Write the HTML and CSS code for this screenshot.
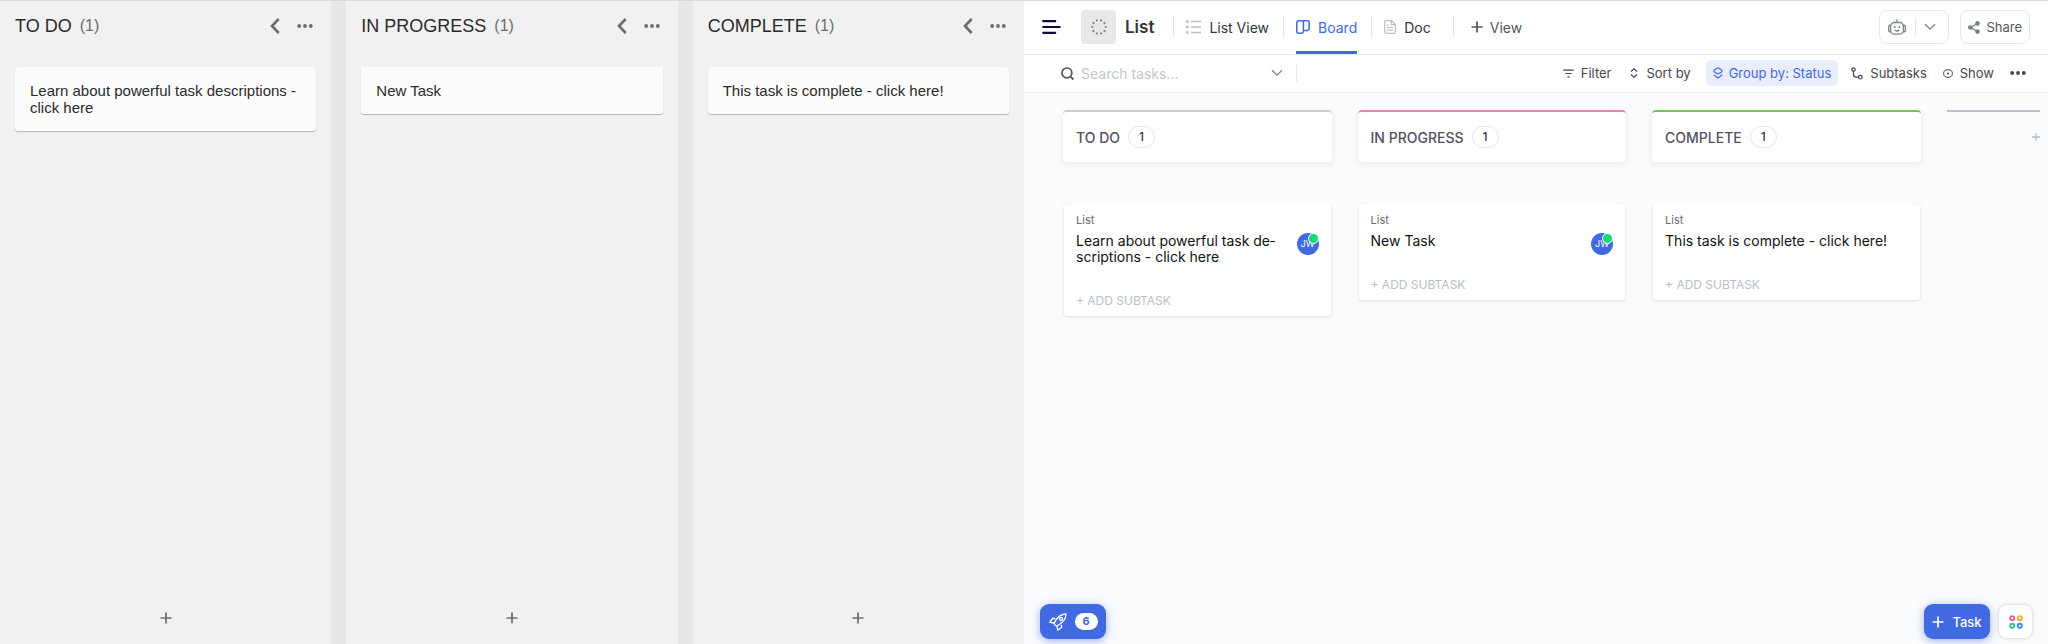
FILE: index.html
```html
<!DOCTYPE html>
<html lang="en">
<head>
    <meta charset="UTF-8">
    <meta name="viewport" content="width=device-width, initial-scale=1.0">
    <title>Boards</title>
    <link rel="stylesheet" href="styles.css">
</head>
<body>
    <!-- shared icons -->
    <svg class="sprite" aria-hidden="true">
        <symbol id="back" viewBox="0 0 10 16"><path d="M8.700 1 2 8l6.700 7" fill="none" stroke="currentColor" stroke-width="2.600"/></symbol>
        <symbol id="dots" viewBox="0 0 16 4"><g fill="currentColor"><circle cx="2.200" cy="2" r="1.900"/><circle cx="8" cy="2" r="1.900"/><circle cx="13.800" cy="2" r="1.900"/></g></symbol>
        <symbol id="plus" viewBox="0 0 12 12"><path d="M6 .5v11M.5 6h11" fill="none" stroke="currentColor" stroke-width="1.700"/></symbol>
        <symbol id="down" viewBox="0 0 12 8"><path d="M1 1.200l5 5 5-5" fill="none" stroke="currentColor" stroke-width="1.300"/></symbol>
    </svg>

    <div class="page">
        <section class="lanes">
            <div class="lane">
                <div class="lane-head">
                    <h2>TO DO</h2><span class="lane-count">(1)</span>
                    <button class="lane-back" aria-label="Collapse"><svg width="10" height="16"><use href="#back"/></svg></button>
                    <button class="lane-menu" aria-label="Menu"><svg width="16" height="4"><use href="#dots"/></svg></button>
                </div>
                <div class="note">Learn about powerful task descriptions - click here</div>
                <button class="lane-add" aria-label="Add task"><svg width="12" height="12"><use href="#plus"/></svg></button>
            </div>
            <div class="lane">
                <div class="lane-head">
                    <h2>IN PROGRESS</h2><span class="lane-count">(1)</span>
                    <button class="lane-back" aria-label="Collapse"><svg width="10" height="16"><use href="#back"/></svg></button>
                    <button class="lane-menu" aria-label="Menu"><svg width="16" height="4"><use href="#dots"/></svg></button>
                </div>
                <div class="note">New Task</div>
                <button class="lane-add" aria-label="Add task"><svg width="12" height="12"><use href="#plus"/></svg></button>
            </div>
            <div class="lane">
                <div class="lane-head">
                    <h2>COMPLETE</h2><span class="lane-count">(1)</span>
                    <button class="lane-back" aria-label="Collapse"><svg width="10" height="16"><use href="#back"/></svg></button>
                    <button class="lane-menu" aria-label="Menu"><svg width="16" height="4"><use href="#dots"/></svg></button>
                </div>
                <div class="note">This task is complete - click here!</div>
                <button class="lane-add" aria-label="Add task"><svg width="12" height="12"><use href="#plus"/></svg></button>
            </div>
        </section>

        <main class="app">
            <header class="topbar">
                <button class="burger" aria-label="Menu">
                    <svg width="19" height="14" viewBox="0 0 19 14"><path d="M1.200 1.200h12M1.200 7h16.500M1.200 12.800h12" fill="none" stroke="currentColor" stroke-width="2.200" stroke-linecap="round"/></svg>
                </button>
                <span class="list-icon">
                    <svg width="18" height="18" viewBox="0 0 18 18"><circle cx="9" cy="9" r="6.800" fill="none" stroke="currentColor" stroke-width="2.200" stroke-linecap="round" stroke-dasharray="0.010 3.990" pathLength="40"/></svg>
                </span>
                <h1>List</h1>
                <nav class="tabs">
                    <a class="tab" href="#">
                        <svg width="15" height="14" viewBox="0 0 15 14" class="pale"><path d="M5 1.500h10M5 7h10M5 12.500h10" fill="none" stroke="currentColor" stroke-width="1.500"/><path d="M0 1.500h2.600M0 7h2.600M0 12.500h2.600" stroke="currentColor" stroke-width="2.400"/></svg>
                        List View
                    </a>
                    <a class="tab active" href="#">
                        <svg width="14" height="14" viewBox="0 0 14 14"><path d="M2.500.8h9q1.700 0 1.700 1.700v6.300q0 1.700-1.700 1.700H7.400v1q0 1.700-1.700 1.700H2.500Q.8 13.200.8 11.500v-9Q.8.8 2.500.8zM7.400.8v9.700" fill="none" stroke="currentColor" stroke-width="1.500"/></svg>
                        Board
                    </a>
                    <a class="tab" href="#">
                        <svg width="12" height="14" viewBox="0 0 12 14" class="pale"><path d="M2.300.7h5.200l3.800 3.800v7.200q0 1.600-1.600 1.600H2.300Q.7 13.300.7 11.700V2.300Q.7.7 2.300.7zM7.300.9v3.800h3.800M3 5h2M3 7.500h6M3 10.200h6" fill="none" stroke="currentColor" stroke-width="1.200"/></svg>
                        Doc
                    </a>
                    <a class="tab add-view" href="#">
                        <svg width="12" height="12"><use href="#plus"/></svg>
                        View
                    </a>
                </nav>
                <button class="box-btn automate" aria-label="Automate">
                    <svg width="18" height="16" viewBox="0 0 18 16"><g fill="none" stroke="currentColor" stroke-width="1.300"><rect x="2.600" y="3.500" width="12.800" height="11.700" rx="4"/><path d="M9 .3v3M2.600 6Q.7 6 .7 8v3q0 2 1.900 2M15.400 6q1.900 0 1.900 2v3q0 2-1.900 2M6.700 11q2.300 2 4.600 0"/></g><circle cx="6.700" cy="8" r="1" fill="currentColor"/><circle cx="11.300" cy="8" r="1" fill="currentColor"/></svg>
                    <i class="split"></i>
                    <svg width="12" height="8"><use href="#down"/></svg>
                </button>
                <button class="box-btn share">
                    <svg width="12" height="13" viewBox="0 0 12 13"><path d="M9.500 2.500 2.500 6.500l7 4" fill="none" stroke="currentColor" stroke-width="1.200"/><g fill="currentColor"><circle cx="9.500" cy="2.400" r="2.300"/><circle cx="2.300" cy="6.500" r="2.300"/><circle cx="9.500" cy="10.600" r="2.300"/></g></svg>
                    <span>Share</span>
                </button>
            </header>

            <div class="toolbar">
                <label class="search">
                    <svg width="13" height="13" viewBox="0 0 13 13"><circle cx="5.900" cy="5.900" r="4.900" fill="none" stroke="currentColor" stroke-width="1.700"/><path d="M9.300 9.300l3.200 3.200" stroke="currentColor" stroke-width="1.900"/></svg>
                    <input type="text" placeholder="Search tasks..." aria-label="Search tasks">
                </label>
                <button class="search-more" aria-label="Search options"><svg width="12" height="8"><use href="#down"/></svg></button>
                <div class="tools">
                    <button class="tool">
                        <svg width="11" height="9" viewBox="0 0 11 9"><path d="M.3 1.200h10.400M2.300 4.500h6.400M4.400 7.800h2.200" stroke="currentColor" stroke-width="1.200"/></svg>
                        Filter
                    </button>
                    <button class="tool">
                        <svg width="12" height="10" viewBox="-3 0 12 10"><path d="M1 3.500 4 .9l3 2.600M1 6.500l3 2.600 3-2.600" fill="none" stroke="currentColor" stroke-width="1.200"/></svg>
                        Sort by
                    </button>
                    <button class="tool group">
                        <svg width="10" height="12" viewBox="0 0 10 12"><path d="M5 .8l4 2.400v1.500L5 7.100 1 4.700V3.200zM.8 7.800 5 10.900l4.200-3.100" fill="none" stroke="currentColor" stroke-width="1.200" stroke-linejoin="round"/></svg>
                        Group by: Status
                    </button>
                    <button class="tool">
                        <svg width="12" height="13" viewBox="0 0 12 13"><g fill="none" stroke="currentColor" stroke-width="1.200"><circle cx="2.500" cy="2.500" r="1.700"/><circle cx="9.300" cy="10.200" r="1.800"/><path d="M2.500 4.200v3.300q0 2.700 2.700 2.700h2.300"/></g></svg>
                        Subtasks
                    </button>
                    <button class="tool">
                        <svg width="10" height="9" viewBox="0 0 10 9"><ellipse cx="5" cy="4.500" rx="4.400" ry="3.800" fill="none" stroke="currentColor"/><circle cx="5" cy="4.500" r="1" fill="currentColor"/></svg>
                        Show
                    </button>
                    <button class="tool more" aria-label="More"><svg width="16" height="4"><use href="#dots"/></svg></button>
                </div>
            </div>

            <div class="board">
                <section class="column todo">
                    <div class="column-head"><h2>TO DO</h2><span class="count">1</span></div>
                    <article class="card">
                        <p class="card-list">List</p>
                        <div class="card-main">
                            <h3>Learn about powerful task de&shy;scriptions - click here</h3>
                            <span class="avatar">JW</span>
                        </div>
                        <button class="subtask">+ ADD SUBTASK</button>
                    </article>
                </section>
                <section class="column progress">
                    <div class="column-head"><h2>IN PROGRESS</h2><span class="count">1</span></div>
                    <article class="card">
                        <p class="card-list">List</p>
                        <div class="card-main">
                            <h3>New Task</h3>
                            <span class="avatar">JW</span>
                        </div>
                        <button class="subtask">+ ADD SUBTASK</button>
                    </article>
                </section>
                <section class="column complete">
                    <div class="column-head"><h2>COMPLETE</h2><span class="count">1</span></div>
                    <article class="card">
                        <p class="card-list">List</p>
                        <div class="card-main">
                            <h3>This task is complete - click here!</h3>
                        </div>
                        <button class="subtask">+ ADD SUBTASK</button>
                    </article>
                </section>
                <section class="new-column">
                    <button aria-label="Add status"><svg width="8" height="8" viewBox="0 0 8 8"><path d="M4 0v8M0 4h8" stroke="currentColor" stroke-width="1.400"/></svg></button>
                </section>
            </div>

            <footer class="actions">
                <button class="fab rocket" aria-label="Get started">
                    <svg width="18" height="18" viewBox="0 0 18 18"><g fill="none" stroke="currentColor" stroke-width="1.300" stroke-linejoin="round"><path d="M6 12Q4.500 10.500 6 8.500C8.500 4 12 1 17 1c0 5-3 8.500-7.500 11Q7.500 13.500 6 12z"/><circle cx="12" cy="6" r="1.500"/><path d="M6.300 5.500H3.500L.8 9.300l4.500.7M12.500 11.700v2.800l-3.800 2.700-.7-4.500"/></g></svg>
                    <span class="fab-count">6</span>
                </button>
                <button class="fab new-task">
                    <svg width="12" height="12"><use href="#plus"/></svg>
                    Task
                </button>
                <button class="apps" aria-label="Apps">
                    <svg width="14" height="14" viewBox="0 0 14 14"><g fill="none" stroke-width="1.900"><circle cx="3.200" cy="3.200" r="2.100" stroke="#e9609b"/><circle cx="10.800" cy="3.200" r="2.100" stroke="#f3ae2b"/><circle cx="3.200" cy="10.800" r="2.100" stroke="#41bd89"/><circle cx="10.800" cy="10.800" r="2.100" stroke="#2f97e6"/></g></svg>
                </button>
            </footer>
        </main>
    </div>
</body>
</html>
```
FILE: styles.css
```css
* {
    box-sizing: border-box;
}

body {
    margin: 0;
    font-family: Inter, sans-serif;
    font-size: 14px;
    color: #33343c;
}

h1, h2, h3, p {
    margin: 0;
    font-weight: normal;
}

button {
    display: flex;
    align-items: center;
    padding: 0;
    border: none;
    background: none;
    color: inherit;
    font: inherit;
    cursor: pointer;
}

svg {
    display: block;
    flex: none;
}

.sprite {
    display: none;
}

.page {
    display: grid;
    grid-template-columns: 1fr 1fr;
    min-height: 100vh;
    border-top: 1px solid #d9d9d9;
}

/* simple board */
.lanes {
    display: flex;
    gap: 15px;
    background-color: #e7e7e7;
    font-family: "Liberation Sans", Arial, sans-serif;
}

.lane {
    flex: 1;
    display: flex;
    flex-direction: column;
    padding: 0 15px;
    background-color: #f1f1f1;
    color: #2a2a2a;
}

.lane-head {
    display: flex;
    align-items: center;
    height: 50px;
    margin-bottom: 16px;
    color: #6c6c6c;
}

.lane-head h2 {
    font-size: 18px;
    color: #2a2a2a;
}

.lane-count {
    margin-left: 8px;
    font-size: 16px;
}

.lane-back {
    margin-left: auto;
}

.lane-menu {
    margin: 0 3px 0 17px;
}

.note {
    padding: 15px;
    border-radius: 3px;
    background-color: #fcfcfc;
    box-shadow: 0 1px 1px rgba(0, 0, 0, 0.25);
    font-size: 15px;
    line-height: 17px;
}

.lane-add {
    margin: auto auto 20px;
    color: #6c6c6c;
}

/* app */
.app {
    display: flex;
    flex-direction: column;
    background-color: #fafbfd;
}

.topbar {
    display: flex;
    align-items: center;
    height: 54px;
    padding: 0 18px 1px;
    border-bottom: 1px solid #e9ebf0;
    background-color: white;
}

.burger {
    color: #0c0c3c;
}

.list-icon {
    display: flex;
    align-items: center;
    justify-content: center;
    width: 35px;
    height: 34px;
    margin: 0 9px 0 20px;
    border-radius: 4px;
    background-color: #e8e8e8;
    color: #7c828d;
}

.topbar h1 {
    margin-right: 19px;
    font-size: 17px;
    font-weight: 600;
}

.tabs {
    display: flex;
    flex: 1;
    height: 54px;
}

.tab {
    display: flex;
    align-items: center;
    gap: 8px;
    margin-right: 14px;
    color: inherit;
    text-decoration: none;
}

.tab::before {
    content: "";
    width: 1px;
    height: 22px;
    margin-right: 4px;
    background-color: #e6e7ee;
}

.tab.active {
    color: #4169e1;
    background: linear-gradient(#4169e1, #4169e1) no-repeat 13px 100% / 100% 3px;
}

.tab.add-view {
    gap: 7px;
    margin-left: 8px;
    color: #54565e;
}

.tab.add-view::before {
    margin-right: 10px;
}

.pale {
    color: #b9bec7;
}

.box-btn {
    height: 34px;
    border: 1px solid #e6e7ee;
    border-radius: 8px;
    color: #7c828d;
}

.automate {
    padding: 0 12px 0 8px;
    margin-right: 11px;
}

.split {
    width: 1px;
    height: 18px;
    margin: 0 8px 0 9px;
    background-color: #e6e7ee;
}

.share {
    gap: 6px;
    padding: 0 7px;
    font-size: 13px;
}

.share span {
    color: #54565e;
}

.toolbar {
    display: flex;
    align-items: center;
    height: 38px;
    padding: 0 22px 1px 37px;
    border-bottom: 1px solid #e9ebf0;
    background-color: white;
}

.search {
    display: flex;
    align-items: center;
    gap: 7px;
    color: #54565e;
}

.search input {
    width: 190px;
    padding: 0;
    border: none;
    outline: none;
    background: none;
    font: inherit;
}

.search input::placeholder {
    color: #c4c6cb;
}

.search-more {
    height: 17px;
    padding-right: 13px;
    border-right: 1px solid #e6e7ee;
    color: #7c828d;
}

.tools {
    display: flex;
    align-items: center;
    margin-left: auto;
}

.tool {
    gap: 7px;
    height: 26px;
    padding: 0 8px;
    font-size: 13px;
    color: #44454c;
}

.group {
    gap: 6px;
    padding: 0 7px;
    margin: 0 5px 0 7px;
    border-radius: 5px;
    background-color: #e9edfc;
    color: #4169e1;
}

.more {
    padding-right: 0;
}

.board {
    flex: 1;
    display: grid;
    grid-template-columns: 23fr 23fr 23fr 8fr;
    gap: 26px;
    padding: 17px 8px 0 39px;
}

.column-head {
    display: flex;
    align-items: center;
    gap: 8px;
    height: 52px;
    margin-bottom: 42px;
    padding: 0 13px;
    border-top: 2px solid #cfcfd1;
    border-radius: 4px;
    background-color: white;
    box-shadow: 0 2px 6px rgba(0, 0, 0, 0.08);
}

.progress .column-head {
    border-top-color: #f77fab;
}

.complete .column-head {
    border-top-color: #6bc950;
}

.column-head h2 {
    font-size: 14px;
    font-weight: 500;
    color: #54505f;
}

.count {
    width: 27px;
    border: 1px solid #e6e7ee;
    border-radius: 11px;
    line-height: 20px;
    font-size: 12px;
    font-weight: 500;
    text-align: center;
}

.card {
    margin: 0 1px;
    padding: 9px 12px 7px;
    border-radius: 3px;
    background-color: white;
    box-shadow: 0 1px 3px rgba(0, 0, 0, 0.12);
}

.card-list {
    font-size: 11px;
    line-height: 14px;
    color: #6a6675;
}

.card-main {
    display: flex;
    justify-content: space-between;
    gap: 20px;
    margin: 6px 0 28px;
}

.card h3 {
    font-size: 14px;
    line-height: 16px;
    color: #111;
}

/* taller than a one-line title, must not push the row down */
.avatar {
    position: relative;
    flex: none;
    width: 22px;
    height: 22px;
    margin-bottom: -10px;
    border-radius: 50%;
    background-color: #4169e1;
    color: white;
    font-size: 9px;
    line-height: 22px;
    text-align: center;
}

.avatar::after {
    content: "";
    position: absolute;
    top: 0;
    right: 0;
    width: 9px;
    height: 9px;
    border: 1px solid white;
    border-radius: 50%;
    background-color: #1bd67c;
}

.subtask {
    font-size: 12px;
    line-height: 16px;
    color: #b9bec7;
}

.new-column {
    border-top: 2px solid #b9bec7;
    color: #b9bec7;
}

.new-column button {
    margin: 21px 0 0 auto;
}

.actions {
    display: flex;
    align-items: center;
    padding: 0 16px 5px;
}

.fab {
    justify-content: center;
    width: 66px;
    height: 35px;
    border-radius: 9px;
    background-color: #4169e1;
    box-shadow: 0 2px 8px rgba(65, 105, 225, 0.5);
    color: white;
    font-weight: 500;
}

.rocket {
    gap: 8px;
    margin-right: auto;
}

.fab-count {
    width: 23px;
    border-radius: 9px;
    background-color: white;
    color: #4169e1;
    font-size: 11px;
    font-weight: 700;
    line-height: 17px;
}

.new-task {
    gap: 8px;
    margin-right: 9px;
    font-size: 13px;
}

.apps {
    justify-content: center;
    width: 33px;
    height: 33px;
    border-radius: 8px;
    background-color: white;
    box-shadow: 0 0 4px rgba(0, 0, 0, 0.2);
}
```
